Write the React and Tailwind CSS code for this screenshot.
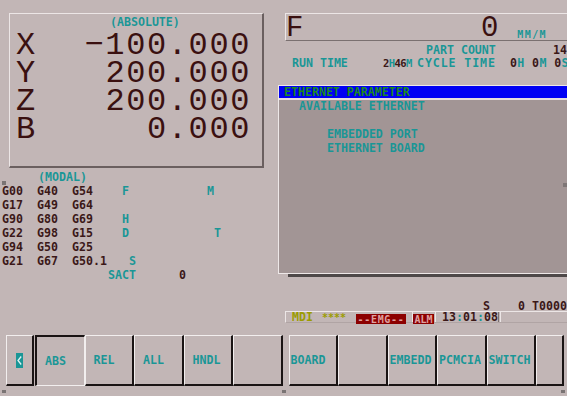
import React from "react";

const teal = "text-[#1a9696]";
const dark = "text-[#3b1818]";

function Key({ label, sunken, wide = true }) {
  return (
    <div
      className={
        (wide ? "w-[49.5px] " : "w-[28px] ") +
        "h-[51px] shrink-0 flex items-center whitespace-pre text-[#1a9696] " +
        (sunken
          ? "border-t-2 border-l-2 border-t-[#1a1414] border-l-[#1a1414] border-r border-b border-r-[#f2eeee] border-b-[#f2eeee]"
          : "border-t border-l border-t-[#f2eeee] border-l-[#f2eeee] border-r-2 border-b-2 border-r-[#1a1414] border-b-[#1a1414]")
      }
    >
      <span className="pl-[1px]">{label}</span>
    </div>
  );
}

export default function App() {
  const mono = "font-['DejaVu_Sans_Mono',monospace]";
  const big = "font-['Liberation_Mono',monospace] font-normal text-[32px] leading-[28px] tracking-[1.6px] text-[#3a1010]";

  return (
    <div
      className={
        "w-[567px] h-[396px] bg-[#c2b6b6] overflow-hidden relative font-bold text-[11.6px] leading-[14px] " +
        mono
      }
    >
      <div className="flex h-[334px]">
        {/* left column */}
        <div className="w-[278px] shrink-0">
          <div className="pt-[13px] pl-[9px]">
            <div className="w-[255px] h-[155px] border-t border-l border-t-[#ece6e6] border-l-[#ece6e6] border-r-2 border-b-2 border-r-[#6a5f5f] border-b-[#6a5f5f]">
              <div className={"pl-[100px] pt-[0.5px] " + teal}>(ABSOLUTE)</div>
              <div className="mt-[3px] pl-[6px] pr-[11px]">
                {[
                  ["X", "-100.000"],
                  ["Y", "200.000"],
                  ["Z", "200.000"],
                  ["B", "0.000"],
                ].map(([a, v]) => (
                  <div key={a} className={"flex justify-between " + big}>
                    <span>{a}</span>
                    <span>{v.replace("-", "\u2212")}</span>
                  </div>
                ))}
              </div>
            </div>
          </div>

          {/* modal */}
          <div className="mt-[2px] relative">
            <div className={"pl-[38px] " + teal}>(MODAL)</div>
            <div className="absolute left-[2px] top-[11px] w-[4px] h-[4px] bg-[#7a7474]" />
            <div className={"pl-[2px] " + dark}>
              <div className="flex">
                <span className="w-[35px]">G00</span>
                <span className="w-[35px]">G40</span>
                <span className="w-[50px]">G54</span>
                <span className={"w-[85px] " + teal}>F</span>
                <span className={teal}>M</span>
              </div>
              <div className="flex">
                <span className="w-[35px]">G17</span>
                <span className="w-[35px]">G49</span>
                <span className="w-[50px]">G64</span>
              </div>
              <div className="flex">
                <span className="w-[35px]">G90</span>
                <span className="w-[35px]">G80</span>
                <span className="w-[50px]">G69</span>
                <span className={teal}>H</span>
              </div>
              <div className="flex">
                <span className="w-[35px]">G22</span>
                <span className="w-[35px]">G98</span>
                <span className="w-[50px]">G15</span>
                <span className={"w-[92px] " + teal}>D</span>
                <span className={teal}>T</span>
              </div>
              <div className="flex">
                <span className="w-[35px]">G94</span>
                <span className="w-[35px]">G50</span>
                <span className="w-[50px]">G25</span>
              </div>
              <div className="flex">
                <span className="w-[35px]">G21</span>
                <span className="w-[35px]">G67</span>
                <span className="w-[57px]">G50.1</span>
                <span className={teal}>S</span>
              </div>
              <div className="flex pl-[106px]">
                <span className={"w-[71px] " + teal}>SACT</span>
                <span>0</span>
              </div>
            </div>
          </div>
        </div>

        {/* right column */}
        <div className="flex-1 min-w-0">
          <div className="ml-[7px] mt-[13px] h-[28px] border-t border-l border-t-[#ece6e6] border-l-[#ece6e6] border-b border-b-[#7a7070] flex items-start">
            <span className="font-['Liberation_Mono',monospace] font-normal text-[29px] leading-[24px] mt-[3px] text-[#3a1010]">
              F
            </span>
            <span className="ml-auto font-['Liberation_Mono',monospace] font-normal text-[29px] leading-[24px] mt-[3px] text-[#3a1010]">
              0
            </span>
            <span className={"ml-[19px] mr-[20px] mt-[15px] text-[10px] leading-[12px] tracking-[1.4px] " + teal}>
              MM/M
            </span>
          </div>

          <div className="flex h-[14px] mt-[1.5px]">
            <span className={"pl-[148px] " + teal}>PART COUNT</span>
            <span className={"ml-auto " + dark}>14</span>
          </div>
          <div className="flex h-[14px] -mt-[1px] whitespace-pre">
            <span className={"pl-[14px] w-[105px] " + teal}>RUN TIME</span>
            <span className="w-[34px] text-[10.5px] tracking-[-0.6px]">
              <span className={dark}>2</span>
              <span className={teal}>H</span>
              <span className={dark}>46</span>
              <span className={teal}>M</span>
            </span>
            <span className={"tracking-[0.9px] " + teal}>CYCLE TIME</span>
            <span className="ml-auto -mr-[2px] tracking-[0.4px]">
              <span className={dark}>0</span>
              <span className={teal}>H </span>
              <span className={dark}>0</span>
              <span className={teal}>M </span>
              <span className={dark}>0</span>
              <span className={teal}>S</span>
            </span>
          </div>

          {/* ethernet parameter panel */}
          <div className="mt-[15.5px]">
            <div className="relative h-[189px] border-t border-l border-b border-[#eee8e8] bg-[#a29595] flex flex-col">
              <div className="h-[12px] bg-[#0000f4] leading-[12px] pl-[5px] text-[#1c8a1c]">
                ETHERNET PARAMETER
              </div>
              <div className="h-[2px] bg-[#e6dede]" />
              <div className={"-mt-[1.5px] " + teal}>
                <div className="pl-[20px]">AVAILABLE ETHERNET</div>
                <div className="h-[14px]" />
                <div className="pl-[48px]">EMBEDDED PORT</div>
                <div className="pl-[48px]">ETHERNET BOARD</div>
              </div>
              <div className="absolute right-0 top-[97px] w-[4px] h-[4px] bg-[#7e7676]" />
            </div>
            <div className="ml-[10px] h-[3px] bg-[#4e4848]" />
          </div>

          <div className={"flex mt-[22px] whitespace-pre " + dark}>
            <span className="pl-[205px] w-[240px]">S</span>
            <span>0 T0000</span>
          </div>

          {/* status bar */}
          <div className="ml-[7px] mt-[-2px] h-[12px] border-t border-l border-b border-t-[#ece6e6] border-l-[#ece6e6] border-b-[#b0a4a4] flex items-stretch leading-[11px] whitespace-pre">
            <span className="pl-[6px] w-[36px] text-[#9c9c00]">MDI</span>
            <span className="w-[34px] text-[10px] text-[#9c9c00]">****</span>
            <span className="mt-[2px] -mb-[2px] w-[50px] bg-[#8c0000] text-[#e0a0a0] text-[10px] tracking-[0.7px] text-center">
              --EMG--
            </span>
            <span className="ml-[6px] w-px bg-[#ece6e6]" />
            <span className="mt-[2px] -mb-[2px] w-[21px] bg-[#8c0000] text-[#e0a0a0] text-[10px] text-center">
              ALM
            </span>
            <span className="ml-[1px] w-px bg-[#ece6e6]" />
            <span className={"pl-[6px] w-[62px] " + dark}>
              13<span className={teal}>:</span>01<span className={teal}>:</span>08
            </span>
            <span className="w-px bg-[#7a7070]" />
            <span className="ml-[1px] w-px bg-[#ece6e6]" />
          </div>
        </div>
      </div>

      {/* softkeys */}
      <div className="flex pl-[6px] mt-[1px]">
        <div className="w-[28px] h-[51px] shrink-0 flex items-center pl-[9px] border-t border-l border-t-[#f2eeee] border-l-[#f2eeee] border-r-2 border-b-2 border-r-[#1a1414] border-b-[#1a1414]">
          <div className="w-[7px] h-[15px] bg-[#1a9696]">
            <svg width="7" height="15" viewBox="0 0 7 15">
              <path d="M5.2 3.5 L2 7.5 L5.2 11.5" stroke="#dff3f3" strokeWidth="1.3" fill="none" />
            </svg>
          </div>
        </div>
        <div className="ml-[1px] flex">
          <Key label=" ABS" sunken />
          <Key label=" REL" />
          <Key label=" ALL" />
          <Key label=" HNDL" />
          <Key label="" />
        </div>
        <div className="ml-[6px] flex">
          <Key label="BOARD" />
          <Key label="" />
          <Key label="EMBEDD" />
          <Key label="PCMCIA" />
          <Key label="SWITCH" />
          <Key label="" wide={false} />
        </div>
      </div>

      <div className="flex justify-between px-[2px] mt-[4px]">
        <div className="w-[4px] h-[3px] bg-[#7a7474]" />
        <div className="w-[4px] h-[3px] bg-[#7a7474]" />
        <div className="w-[4px] h-[3px] bg-[#7a7474]" />
      </div>
    </div>
  );
}
